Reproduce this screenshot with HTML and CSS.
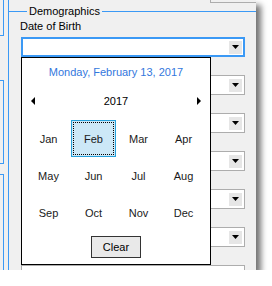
FILE: index.html
```html
<!DOCTYPE html>
<html lang="en">
<head>
    <meta charset="UTF-8">
    <title>Demographics</title>
    <link rel="stylesheet" href="styles.css">
</head>
<body>
    <div class="window">
        <div class="side">
            <div class="side-box first"></div>
            <div class="side-box second"></div>
            <div class="side-box third"></div>
        </div>
        <div class="rail"></div>
        <div class="main">
            <div class="above"><div class="above-box"></div></div>
            <fieldset class="group">
                <legend>Demographics</legend>
                <div class="field-row">
                    <label>Date of Birth</label>
                    <div class="combo focused">
                        <span class="drop"><svg width="7" height="4" viewBox="0 0 7 4"><polygon points="0,0 7,0 3.5,4" fill="#000"/></svg></span>
                    </div>
                </div>
                <!-- the rows below sit behind the open calendar, their labels are covered -->
                <div class="field-row">
                    <div class="label-space"></div>
                    <div class="combo">
                        <span class="drop"><svg width="7" height="4" viewBox="0 0 7 4"><polygon points="0,0 7,0 3.5,4" fill="#000"/></svg></span>
                    </div>
                </div>
                <div class="field-row">
                    <div class="label-space"></div>
                    <div class="combo">
                        <span class="drop"><svg width="7" height="4" viewBox="0 0 7 4"><polygon points="0,0 7,0 3.5,4" fill="#000"/></svg></span>
                    </div>
                </div>
                <div class="field-row">
                    <div class="label-space"></div>
                    <div class="combo">
                        <span class="drop"><svg width="7" height="4" viewBox="0 0 7 4"><polygon points="0,0 7,0 3.5,4" fill="#000"/></svg></span>
                    </div>
                </div>
                <div class="field-row">
                    <div class="label-space"></div>
                    <div class="combo">
                        <span class="drop"><svg width="7" height="4" viewBox="0 0 7 4"><polygon points="0,0 7,0 3.5,4" fill="#000"/></svg></span>
                    </div>
                </div>
                <div class="field-row">
                    <div class="label-space"></div>
                    <div class="combo">
                        <span class="drop"><svg width="7" height="4" viewBox="0 0 7 4"><polygon points="0,0 7,0 3.5,4" fill="#000"/></svg></span>
                    </div>
                </div>
                <div class="field-row">
                    <div class="label-space"></div>
                    <div class="combo"></div>
                </div>
            </fieldset>
        </div>

        <div class="calendar">
            <div class="cal-title">Monday, February 13, 2017</div>
            <div class="cal-year">
                <svg width="4" height="8" viewBox="0 0 4 8"><polygon points="4,0 4,8 0,4" fill="#000"/></svg>
                <span>2017</span>
                <svg width="4" height="8" viewBox="0 0 4 8"><polygon points="0,0 0,8 4,4" fill="#000"/></svg>
            </div>
            <div class="cal-grid">
                <div class="month">Jan</div>
                <div class="month selected">Feb</div>
                <div class="month">Mar</div>
                <div class="month">Apr</div>
                <div class="month">May</div>
                <div class="month">Jun</div>
                <div class="month">Jul</div>
                <div class="month">Aug</div>
                <div class="month">Sep</div>
                <div class="month">Oct</div>
                <div class="month">Nov</div>
                <div class="month">Dec</div>
            </div>
            <div class="cal-foot">
                <button class="clear-btn">Clear</button>
            </div>
        </div>
    </div>
</body>
</html>
```

FILE: styles.css
```css
body {
    margin: 0;
    background: #ffffff;
    font-family: 'Liberation Sans', Arial, sans-serif;
    font-size: 11px;
    color: #000;
}

.window {
    position: relative;
    width: 256px;
    height: 270px;
    background: #f0f0f0;
    box-shadow: 5px 5px 6px rgba(0, 0, 0, 0.55);
    overflow: hidden;
    display: flex;
}

.side {
    width: 4px;
    flex-shrink: 0;
    display: flex;
    flex-direction: column;
}
.side-box {
    box-sizing: border-box;
    border: 1px solid #3b99f5;
    border-left: none;
}
.side-box.first {
    height: 36px;
    border-top: none;
}
.side-box.second {
    margin-top: 44px;
    height: 84px;
}
.side-box.third {
    margin-top: 10px;
    flex: 1;
    border-bottom: none;
}

/* left edge of the group box, runs the full height */
.rail {
    width: 1px;
    flex-shrink: 0;
    margin-left: 4px;
    background: #3b99f5;
}

.main {
    flex: 1;
    min-width: 0;
    display: flex;
    flex-direction: column;
}
.above {
    height: 3px;
    flex-shrink: 0;
    display: flex;
    justify-content: flex-end;
}
.above-box {
    width: 46px;
    box-sizing: border-box;
    border-left: 1px solid #adadad;
    border-bottom: 1px solid #adadad;
}

.group {
    margin: 2px 0 0;
    padding: 1px 0 0 12px;
    width: 280px;
    flex-shrink: 0;
    border: 1px solid #3b99f5;
    border-left: none;
    border-bottom: none;
    min-width: 0;
    flex-grow: 1;
}
.group legend {
    margin-left: 6px;
    padding: 0 2px;
    line-height: 13px;
}

.field-row {
    display: flex;
    flex-direction: column;
}
.field-row label,
.label-space {
    height: 14px;
    line-height: 14px;
    margin-bottom: 4px;
    margin-left: -1px;
}
.combo {
    box-sizing: border-box;
    width: 224px;
    height: 20px;
    background: #fff;
    border: 1px solid #adadad;
    display: flex;
    align-items: center;
    justify-content: flex-end;
    padding-right: 2px;
}
.combo.focused {
    border: 2px solid #3b99f5;
    padding-right: 1px;
}
.drop {
    width: 13px;
    height: 13px;
    background: #e6e6e6;
    display: flex;
    align-items: center;
    justify-content: center;
}

.calendar {
    position: absolute;
    left: 21px;
    top: 57px;
    width: 190px;
    height: 208px;
    box-sizing: border-box;
    border: 1px solid #000;
    background: #fff;
    display: flex;
    flex-direction: column;
}
.cal-title {
    margin-top: 8px;
    line-height: 13px;
    text-align: center;
    color: #3377dd;
}
.cal-year {
    margin-top: 15px;
    height: 13px;
    padding: 0 9px;
    display: flex;
    align-items: center;
    justify-content: space-between;
}
.cal-grid {
    margin: 13px 0 0 4px;
    display: grid;
    grid-template-columns: repeat(4, 45px);
    grid-auto-rows: 37px;
}
.month {
    display: flex;
    align-items: center;
    justify-content: center;
    color: #1a1a1a;
}
.month.selected {
    background: #cce8f7;
    border: 1px solid #26a0da;
    outline: 1px dotted #000;
    outline-offset: -3px;
}
.cal-foot {
    margin-top: 5px;
    display: flex;
    justify-content: center;
}
.clear-btn {
    width: 50px;
    height: 22px;
    padding: 0;
    font: inherit;
    color: #000;
    background: #e9e9e9;
    border: 1px solid #333;
    border-radius: 0;
}
```
